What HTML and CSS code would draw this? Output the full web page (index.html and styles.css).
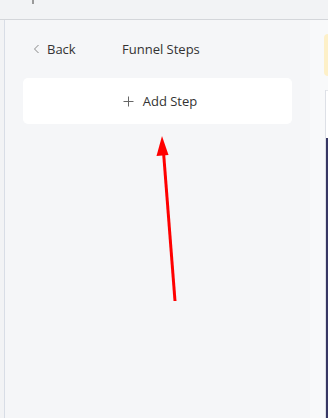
FILE: index.html
```html
<!DOCTYPE html>
<html>
<head>
<meta charset="utf-8">
<link rel="stylesheet" href="styles.css">
</head>
<body>
<div class="topbar"><span class="tick"></span></div>
<div class="main">
  <div class="gutter"></div>
  <div class="sidebar">
    <div class="head">
      <a class="back"><svg width="7" height="10" viewBox="0 0 7 10"><path d="M5.5 1 L1.5 5 L5.5 9" fill="none" stroke="#888" stroke-width="1"/></svg><span>Back</span></a>
      <span class="title">Funnel Steps</span>
    </div>
    <div class="card"><svg class="plus" width="11" height="11" viewBox="0 0 11 11"><path d="M5.5 0.5 V10.5 M0.5 5.5 H10.5" stroke="#666" stroke-width="1"/></svg><span>Add Step</span></div>
  </div>
  <div class="rightpane">
    <div class="content">
      <div class="notice"></div>
      <div class="preview"><div class="whitebar"></div><div class="navy"></div></div>
    </div>
  </div>
</div>
<svg class="arrow" width="328" height="418" viewBox="0 0 328 418">
  <line x1="175" y1="301" x2="163.5" y2="152" stroke="#ff0000" stroke-width="3"/>
  <polygon points="162,136 156.5,156 168.5,155" fill="#ff0000"/>
</svg>
</body>
</html>
```
FILE: styles.css
```css
html, body { margin: 0; padding: 0; }
body {
  width: 328px; height: 418px; overflow: hidden;
  background: #f5f6f8;
  font-family: "Open Sans", "Noto Sans", sans-serif;
  color: #333;
  position: relative;
}
.topbar {
  height: 19px;
  background: #f2f3f5;
  border-bottom: 1px solid #d4d6da;
  position: relative;
}
.tick {
  position: absolute; left: 32px; top: 0;
  width: 1.5px; height: 4px; background: #9a9a9a;
}
.main { display: flex; height: 398px; }
.gutter { width: 4px; background: #f2f3f5; border-right: 1px solid #d8dde6; }
.sidebar { width: 305px; background: #f5f6f8; padding: 0 18px; box-sizing: border-box; }
.head { display: flex; align-items: center; height: 58px; padding-left: 10px; }
.back { display: flex; align-items: center; gap: 7px; font-size: 13px; color: #333; width: 89px; }
.title { font-size: 13px; color: #333; }
.card {
  background: #fff; border-radius: 5px; height: 46px; box-sizing: border-box;
  display: flex; align-items: center; justify-content: center; gap: 9px;
  font-size: 13px; color: #333; width: 269px; padding-left: 5px;
}
.plus { display: block; }
.rightpane { flex: 1; background: #f8f9fa; padding-left: 14px; }
.content { padding-top: 14px; }
.notice { height: 42px; background: #fdf0c8; border-radius: 5px 0 0 5px; }
.preview { margin-top: 14px; margin-left: 1px; border-left: 1px solid #dde0e6; }
.whitebar { height: 47px; background: #fff; border-top: 1px solid #e4e6ea; }
.navy { height: 300px; background: #373764; }
.arrow { position: absolute; left: 0; top: 0; }
```
